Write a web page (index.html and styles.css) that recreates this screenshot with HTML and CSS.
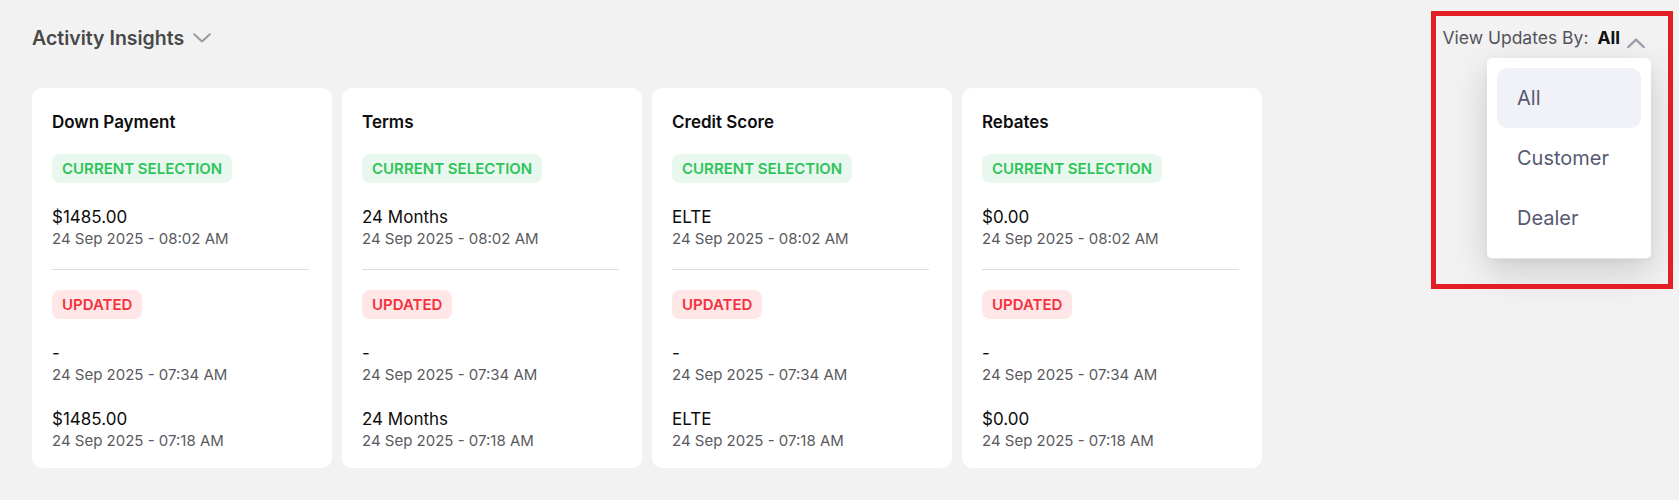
FILE: index.html
```html
<!DOCTYPE html>
<html lang="en">
<head>
<meta charset="utf-8">
<title>Activity Insights</title>
<link rel="stylesheet" href="styles.css">
</head>
<body>
<div class="page">
  <header class="toolbar">
    <div class="section-title">
      <span>Activity Insights</span>
      <svg class="chev-down" width="18" height="10" viewBox="0 0 18 10"><path d="M1.2 1.2 L9 8.6 L16.8 1.2" fill="none" stroke="#9b9b9b" stroke-width="2" stroke-linecap="round" stroke-linejoin="round"/></svg>
    </div>
    <div class="filter">
      <span class="filter-label">View Updates By:</span>
      <span class="filter-value">All</span>
      <svg class="chev-up" width="18" height="10" viewBox="0 0 18 10"><path d="M1.3 9 L9 1.6 L16.7 9" fill="none" stroke="#9c9eb0" stroke-width="2.4" stroke-linecap="round" stroke-linejoin="round"/></svg>
      <ul class="menu">
        <li class="menu-item is-active">All</li>
        <li class="menu-item">Customer</li>
        <li class="menu-item">Dealer</li>
      </ul>
      <div class="highlight-box"></div>
    </div>
  </header>

  <div class="cards">
    <section class="card">
      <h3 class="card-title">Down Payment</h3>
      <span class="badge badge-current">CURRENT SELECTION</span>
      <div class="entry"><div class="entry-value">$1485.00</div><div class="entry-date">24 Sep 2025 - 08:02 AM</div></div>
      <hr class="divider">
      <span class="badge badge-updated">UPDATED</span>
      <div class="entry"><div class="entry-value">-</div><div class="entry-date">24 Sep 2025 - 07:34 AM</div></div>
      <div class="entry"><div class="entry-value">$1485.00</div><div class="entry-date">24 Sep 2025 - 07:18 AM</div></div>
    </section>
    <section class="card">
      <h3 class="card-title">Terms</h3>
      <span class="badge badge-current">CURRENT SELECTION</span>
      <div class="entry"><div class="entry-value">24 Months</div><div class="entry-date">24 Sep 2025 - 08:02 AM</div></div>
      <hr class="divider">
      <span class="badge badge-updated">UPDATED</span>
      <div class="entry"><div class="entry-value">-</div><div class="entry-date">24 Sep 2025 - 07:34 AM</div></div>
      <div class="entry"><div class="entry-value">24 Months</div><div class="entry-date">24 Sep 2025 - 07:18 AM</div></div>
    </section>
    <section class="card">
      <h3 class="card-title">Credit Score</h3>
      <span class="badge badge-current">CURRENT SELECTION</span>
      <div class="entry"><div class="entry-value">ELTE</div><div class="entry-date">24 Sep 2025 - 08:02 AM</div></div>
      <hr class="divider">
      <span class="badge badge-updated">UPDATED</span>
      <div class="entry"><div class="entry-value">-</div><div class="entry-date">24 Sep 2025 - 07:34 AM</div></div>
      <div class="entry"><div class="entry-value">ELTE</div><div class="entry-date">24 Sep 2025 - 07:18 AM</div></div>
    </section>
    <section class="card">
      <h3 class="card-title">Rebates</h3>
      <span class="badge badge-current">CURRENT SELECTION</span>
      <div class="entry"><div class="entry-value">$0.00</div><div class="entry-date">24 Sep 2025 - 08:02 AM</div></div>
      <hr class="divider">
      <span class="badge badge-updated">UPDATED</span>
      <div class="entry"><div class="entry-value">-</div><div class="entry-date">24 Sep 2025 - 07:34 AM</div></div>
      <div class="entry"><div class="entry-value">$0.00</div><div class="entry-date">24 Sep 2025 - 07:18 AM</div></div>
    </section>
  </div>
</div>
</body>
</html>
```

FILE: styles.css
```css
* { box-sizing: border-box; }

html, body {
  margin: 0;
  padding: 0;
  background: #f2f2f2;
  font-family: Inter, "Noto Sans", "Liberation Sans", sans-serif;
  color: #111;
}

.page {
  padding: 26px 32px 0 32px;
  min-height: 500px;
}

.toolbar {
  display: flex;
  justify-content: space-between;
  align-items: center;
  height: 24px;
}

.section-title {
  display: flex;
  align-items: center;
  gap: 9px;
  font-size: 19.5px;
  line-height: 24px;
  font-weight: 600;
  color: #484848;
}

.chev-down { display: block; }

.filter {
  position: relative;
  display: flex;
  align-items: center;
  font-size: 17.5px;
  line-height: 24px;
  margin-right: 3px;
}

.filter-label {
  color: #52545c;
}

.filter-value {
  margin-left: 9px;
  font-weight: 700;
  color: #111;
}

.chev-up {
  display: block;
  margin-left: 7px;
  margin-top: 10px;
  margin-right: -1px;
}

.menu {
  position: absolute;
  top: 32px;
  right: -7px;
  width: 164px;
  margin: 0;
  padding: 10px;
  list-style: none;
  background: #fff;
  border-radius: 5px;
  border-bottom: 1px solid #e4e4ec;
  box-shadow: 0 12px 36px rgba(0, 0, 0, 0.16), 0 2px 6px rgba(0, 0, 0, 0.04);
  z-index: 2;
}

.menu-item {
  height: 60px;
  line-height: 60px;
  padding: 0 20px;
  border-radius: 10px;
  font-size: 20px;
  color: #565a70;
}

.menu-item.is-active {
  background: #f1f2f7;
}

.highlight-box {
  position: absolute;
  top: -15px;
  right: -29px;
  width: 242px;
  height: 278px;
  border: 5px solid #e41e25;
  z-index: 3;
  pointer-events: none;
}

.cards {
  display: flex;
  align-items: flex-start;
  gap: 10px;
  margin-top: 38px;
}

.card {
  width: 300px;
  background: #fff;
  border-radius: 10px;
  padding: 22px 23px 17px 20px;
  display: flex;
  flex-direction: column;
  align-items: flex-start;
}

.card > * { flex-shrink: 0; }

.card-title {
  margin: 0;
  font-size: 17px;
  line-height: 24px;
  font-weight: 600;
  color: #0d0d0d;
}

.badge {
  display: inline-block;
  height: 29px;
  line-height: 29px;
  padding: 0 10px;
  border-radius: 8px;
  font-size: 15px;
  font-weight: 600;
}

.card-title + .badge { margin-top: 20px; }

.badge-current {
  background: #e9f8ee;
  color: #2fc45b;
}

.badge-updated {
  background: #ffe6e7;
  color: #f2323f;
}

.entry { margin-top: 23px; }

.entry-value {
  font-size: 17px;
  line-height: 22px;
  color: #0d0d0d;
}

.entry-date {
  font-size: 15px;
  line-height: 21px;
  color: #5a5a5e;
}

.divider {
  align-self: stretch;
  margin: 20px 0 20px 0;
  border: 0;
  height: 1px;
  background: #dcdce8;
}
```
